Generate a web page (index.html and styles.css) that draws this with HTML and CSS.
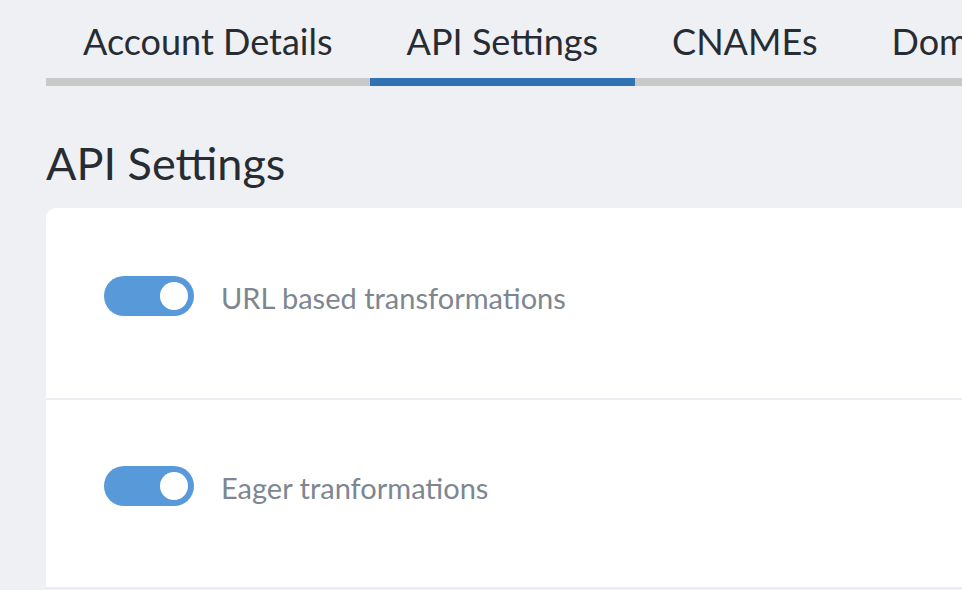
FILE: index.html
```html
<!DOCTYPE html>
<html lang="en">
<head>
    <meta charset="UTF-8">
    <meta name="viewport" content="width=device-width, initial-scale=1.0">
    <title>API Settings</title>
    <link rel="stylesheet" href="styles.css">
</head>
<body>
    <nav class="tabs">
        <a class="tab">Account Details</a>
        <a class="tab active">API Settings</a>
        <a class="tab">CNAMEs</a>
        <a class="tab">Domains</a>
    </nav>
    <h1 class="title">API Settings</h1>
    <div class="card">
        <div class="row">
            <span class="toggle on"><span class="knob"></span></span>
            <span class="label">URL based transformations</span>
        </div>
        <div class="row">
            <span class="toggle on"><span class="knob"></span></span>
            <span class="label">Eager tranformations</span>
        </div>
    </div>
</body>
</html>
```

FILE: styles.css
```css
html, body {
    margin: 0;
    overflow: hidden;
}
body {
    font-family: Lato, "Open Sans", sans-serif;
    background-color: #eff0f4;
    color: #272c33;
    padding-left: 46px;
    width: 1200px;
}
.tabs {
    display: flex;
    height: 86px;
}
.tab {
    display: block;
    box-sizing: border-box;
    height: 86px;
    padding: 18px 37px 0;
    font-size: 36px;
    line-height: 46px;
    border-bottom: 8px solid #c9c9c9;
    white-space: nowrap;
}
.tab.active {
    border-bottom-color: #3172b2;
}
.title {
    margin: 0;
    padding-top: 42px;
    height: 80px;
    font-size: 45px;
    font-weight: normal;
    line-height: 70px;
}
.card {
    background: white;
    border-radius: 10px 0 0 0;
    border-bottom: 2px solid #eeedf3;
}
.row {
    display: flex;
    align-items: center;
    gap: 27px;
    padding: 68px 58px 82px;
    border-bottom: 2px solid #eeedf3;
}
.row:last-child {
    border-bottom: none;
    padding: 66px 58px 81px;
}
.toggle {
    display: flex;
    justify-content: flex-end;
    align-items: center;
    box-sizing: border-box;
    width: 90px;
    height: 40px;
    padding: 0 6px;
    border-radius: 20px;
    background: #5899d9;
}
.knob {
    width: 28px;
    height: 28px;
    border-radius: 50%;
    background: white;
}
.label {
    font-size: 29px;
    line-height: 36px;
    padding-top: 4px;
    color: #7e8690;
}
```
